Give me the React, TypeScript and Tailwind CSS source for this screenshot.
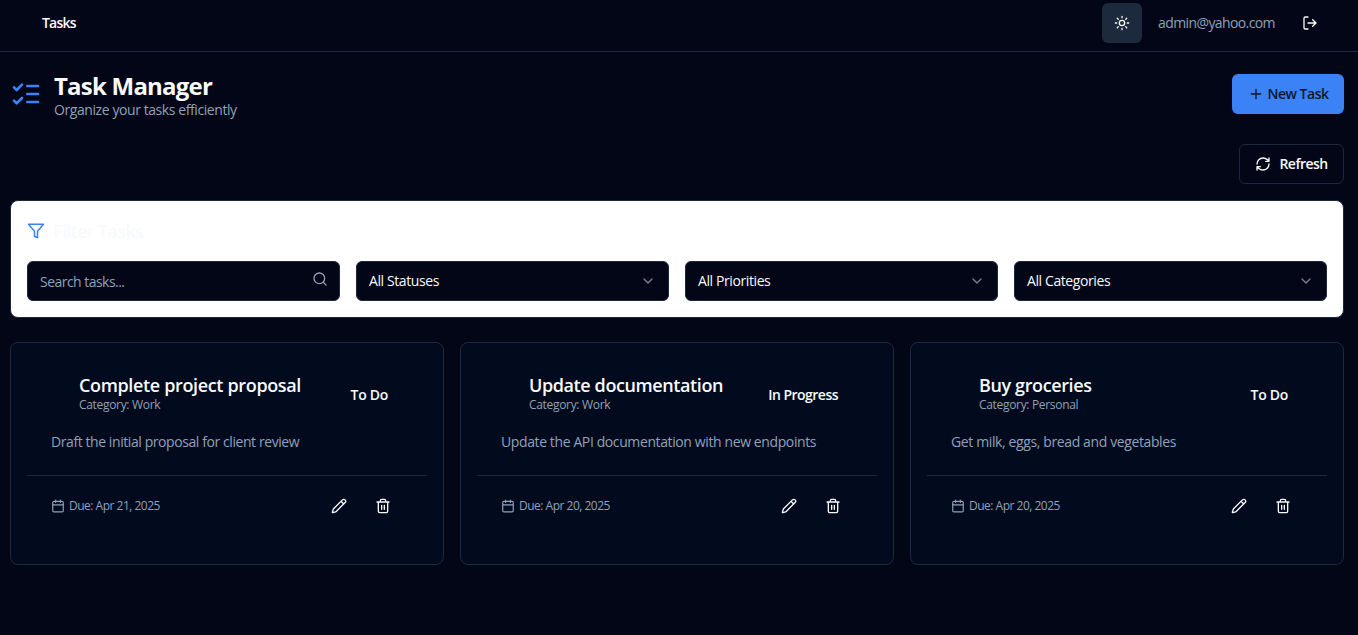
import type { ReactNode } from "react";

function Icon({ size, className = "", children }: { size: number; className?: string; children: ReactNode }) {
  return (
    <svg
      width={size}
      height={size}
      viewBox="0 0 24 24"
      fill="none"
      stroke="currentColor"
      strokeWidth="2"
      strokeLinecap="round"
      strokeLinejoin="round"
      className={`shrink-0 ${className}`}
    >
      {children}
    </svg>
  );
}

const Sun = () => (
  <Icon size={16}>
    <circle cx="12" cy="12" r="4" />
    <path d="M12 2v2M12 20v2M4.93 4.93l1.41 1.41M17.66 17.66l1.41 1.41M2 12h2M20 12h2M6.34 17.66l-1.41 1.41M19.07 4.93l-1.41 1.41" />
  </Icon>
);

const LogOut = () => (
  <Icon size={16}>
    <path d="M9 21H5a2 2 0 0 1-2-2V5a2 2 0 0 1 2-2h4M16 17l5-5-5-5M21 12H9" />
  </Icon>
);

const ListChecks = () => (
  <Icon size={32} className="text-[#3b82f6]">
    <path d="m3 17 2 2 4-4M3 7l2 2 4-4M13 6h8M13 12h8M13 18h8" />
  </Icon>
);

const Plus = () => (
  <Icon size={16}>
    <path d="M5 12h14M12 5v14" />
  </Icon>
);

const Refresh = () => (
  <Icon size={16}>
    <path d="M3 12a9 9 0 0 1 9-9 9.75 9.75 0 0 1 6.74 2.74L21 8M21 3v5h-5M21 12a9 9 0 0 1-9 9 9.75 9.75 0 0 1-6.74-2.74L3 16M8 16H3v5" />
  </Icon>
);

const Funnel = () => (
  <Icon size={18} className="text-[#3b82f6]">
    <path d="M22 3H2l8 9.46V19l4 2v-8.54L22 3z" />
  </Icon>
);

const Search = () => (
  <Icon size={16} className="-mt-1 text-slate-400">
    <circle cx="11" cy="11" r="8" />
    <path d="m21 21-4.3-4.3" />
  </Icon>
);

const ChevronDown = () => (
  <Icon size={16} className="text-slate-50 opacity-50">
    <path d="m6 9 6 6 6-6" />
  </Icon>
);

const Calendar = () => (
  <Icon size={14}>
    <path d="M8 2v4M16 2v4M3 10h18" />
    <rect width="18" height="18" x="3" y="4" rx="2" />
  </Icon>
);

const Pencil = () => (
  <Icon size={16}>
    <path d="M21.174 6.812a1 1 0 0 0-3.986-3.987L3.842 16.174a2 2 0 0 0-.5.83l-1.321 4.352a.5.5 0 0 0 .623.622l4.353-1.32a2 2 0 0 0 .83-.497zM15 5l4 4" />
  </Icon>
);

const Trash = () => (
  <Icon size={16}>
    <path d="M3 6h18M19 6v14c0 1-1 2-2 2H7c-1 0-2-1-2-2V6M8 6V4c0-1 1-2 2-2h4c1 0 2 1 2 2v2M10 11v6M14 11v6" />
  </Icon>
);

type Task = {
  title: string;
  titleTracking: string;
  category: string;
  status: string;
  statusTracking: string;
  description: string;
  descriptionTracking: string;
  due: string;
};

const tasks: Task[] = [
  {
    title: "Complete project proposal",
    titleTracking: "tracking-[-0.35px]",
    category: "Work",
    status: "To Do",
    statusTracking: "tracking-[-0.3px]",
    description: "Draft the initial proposal for client review",
    descriptionTracking: "tracking-[-0.42px]",
    due: "Apr 21, 2025",
  },
  {
    title: "Update documentation",
    titleTracking: "tracking-[-0.4px]",
    category: "Work",
    status: "In Progress",
    statusTracking: "tracking-[-0.52px]",
    description: "Update the API documentation with new endpoints",
    descriptionTracking: "tracking-[-0.39px]",
    due: "Apr 20, 2025",
  },
  {
    title: "Buy groceries",
    titleTracking: "tracking-[-0.38px]",
    category: "Personal",
    status: "To Do",
    statusTracking: "tracking-[-0.3px]",
    description: "Get milk, eggs, bread and vegetables",
    descriptionTracking: "tracking-[-0.38px]",
    due: "Apr 20, 2025",
  },
];

function TaskCard({ task }: { task: Task }) {
  return (
    <article className="h-[223px] rounded-lg border border-slate-800 bg-[#020a1e] px-4 pt-4">
      <div className="flex h-[72px] items-center justify-between pr-[39px] pl-[52px]">
        <div className="pb-[5px]">
          <h3 className={`text-lg leading-6 font-semibold whitespace-nowrap ${task.titleTracking}`}>{task.title}</h3>
          <p className="text-xs leading-4 tracking-[-0.32px] text-slate-400">Category: {task.category}</p>
        </div>
        <span className={`text-sm leading-5 font-semibold whitespace-nowrap ${task.statusTracking}`}>{task.status}</span>
      </div>
      <p className={`h-[44px] pl-6 text-sm leading-[21px] whitespace-nowrap text-slate-400 ${task.descriptionTracking}`}>
        {task.description}
      </p>
      <div className="flex h-[61px] items-center justify-between border-t border-slate-800 pr-6 pl-6">
        <div className="flex items-center gap-1 text-xs tracking-[-0.5px] text-slate-400">
          <Calendar />
          <span>Due: {task.due}</span>
        </div>
        <div className="flex gap-1">
          <button className="flex size-10 items-center justify-center">
            <Pencil />
          </button>
          <button className="flex size-10 items-center justify-center">
            <Trash />
          </button>
        </div>
      </div>
    </article>
  );
}

function Select({ label }: { label: string }) {
  return (
    <button className="flex h-10 items-center justify-between rounded-md border border-slate-800 bg-[#020617] px-3 text-sm tracking-[-0.4px]">
      <span>{label}</span>
      <ChevronDown />
    </button>
  );
}

export default function App() {
  return (
    <div className="h-[635px] overflow-hidden bg-[#020617] font-['Open_Sans','Noto_Sans',sans-serif] text-slate-50">
      <header className="flex h-[52px] items-center justify-between border-b border-slate-800 pr-7 pb-[5px] pl-[42px]">
        <span className="text-sm font-semibold tracking-[-0.8px]">Tasks</span>
        <div className="flex items-center">
          <button className="flex size-10 items-center justify-center rounded-md bg-slate-800">
            <Sun />
          </button>
          <span className="ml-4 w-[132px] text-sm tracking-[-0.6px] whitespace-nowrap text-slate-400">
            admin@yahoo.com
          </span>
          <button className="flex size-10 items-center justify-center">
            <LogOut />
          </button>
        </div>
      </header>
      <main className="pr-3.5 pl-2.5">
        <div className="flex h-[84px] items-center justify-between">
          <div className="flex items-center gap-3">
            <ListChecks />
            <div>
              <h1 className="text-2xl leading-8 font-bold tracking-[-0.78px]">Task Manager</h1>
              <p className="text-sm leading-4 tracking-[-0.42px] text-slate-400">Organize your tasks efficiently</p>
            </div>
          </div>
          <button className="flex h-10 w-28 items-center justify-center gap-1 rounded-md bg-[#3b82f6] text-sm font-semibold tracking-[-0.5px] text-slate-900">
            <Plus />
            <span>New Task</span>
          </button>
        </div>
        <div className="flex justify-end pt-2">
          <button className="flex h-10 w-[105px] items-center justify-center gap-2 rounded-md border border-slate-800 text-sm font-semibold tracking-[-0.55px]">
            <Refresh />
            <span>Refresh</span>
          </button>
        </div>
        <section className="mt-4 h-[118px] rounded-lg border border-slate-800 bg-white px-4 pt-4">
          <div className="flex h-7 items-center gap-2">
            <Funnel />
            <h2 className="text-lg font-semibold tracking-[-0.65px] text-slate-50">Filter Tasks</h2>
          </div>
          <div className="mt-4 grid grid-cols-4 gap-4">
            <div className="flex h-10 items-center justify-between rounded-md border border-slate-800 bg-[#020617] pr-[11px] pl-3 text-sm text-slate-400">
              <span className="pt-0.5 tracking-[-0.53px]">Search tasks...</span>
              <Search />
            </div>
            <Select label="All Statuses" />
            <Select label="All Priorities" />
            <Select label="All Categories" />
          </div>
        </section>
        <div className="mt-6 grid grid-cols-3 gap-4">
          {tasks.map((task) => (
            <TaskCard key={task.title} task={task} />
          ))}
        </div>
      </main>
    </div>
  );
}
